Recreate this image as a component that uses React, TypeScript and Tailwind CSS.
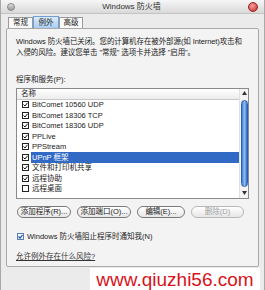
import React from "react";

const ROWS = [
  { label: "BitComet 10560 UDP", checked: true },
  { label: "BitComet 18306 TCP", checked: true },
  { label: "BitComet 18306 UDP", checked: true },
  { label: "PPLive", checked: true },
  { label: "PPStream", checked: true },
  { label: "UPnP 框架", checked: true, selected: true },
  { label: "文件和打印机共享", checked: true },
  { label: "远程协助", checked: true },
  { label: "远程桌面", checked: false },
];

const FONT = { fontFamily: '"Liberation Sans", "Noto Sans CJK SC", sans-serif' };

function Box({ checked }: { checked: boolean }) {
  return (
    <span className="w-[7px] h-[7px] border border-[#222] bg-white flex items-center justify-center shrink-0">
      {checked && (
        <svg width="5" height="5" viewBox="0 0 5 5">
          <path d="M0.5 2.5 L2 4 L4.5 0.8" stroke="#111" strokeWidth="1" fill="none" />
        </svg>
      )}
    </span>
  );
}

function Btn({ children, disabled }: { children: React.ReactNode; disabled?: boolean }) {
  return (
    <div
      className={
        "h-[12px] rounded-full border flex items-center justify-center text-[7.5px] leading-none bg-gradient-to-b from-white to-[#e6e6e6] " +
        (disabled ? "border-[#b8b8b8] text-[#a0a0a0]" : "border-[#7a7a7a] text-[#222]")
      }
    >
      {children}
    </div>
  );
}

export default function App() {
  return (
    <div className="relative w-[265px] h-[290px] bg-[#ebebeb] overflow-hidden border-x border-[#a8a8a8] text-[#222]" style={FONT}>
      {/* title bar */}
      <div className="h-[14px] flex items-center justify-between px-[6px] bg-gradient-to-b from-[#f6f6f6] to-[#d9d9d9] border-b border-[#c4c4c4]">
        <span className="w-[8px] h-[8px] rounded-full bg-gradient-to-b from-[#e0e0e0] to-[#9a9a9a] border border-[#888]" />
        <span className="text-[8px] leading-none text-[#333]">Windows 防火墙</span>
        <span className="w-[10px] h-[10px] rounded-full bg-[radial-gradient(circle_at_40%_35%,#f5a0a0,#c42828)] border border-[#9c2020]" />
      </div>

      {/* tabs */}
      <div className="flex pl-[7px] pt-[3px] h-[14px] items-end">
        <div className="h-[11px] w-[25px] border border-b-0 border-[#9a9a9a] bg-[#fafafa] text-[7.5px] leading-none flex items-center justify-center">常规</div>
        <div className="h-[12px] w-[26px] border border-b-0 border-[#6f9fd4] bg-gradient-to-b from-[#d9eafb] to-[#a9cdf2] text-[7.5px] leading-none flex items-center justify-center">例外</div>
        <div className="h-[11px] w-[24px] border border-b-0 border-[#9a9a9a] bg-[#fafafa] text-[7.5px] leading-none flex items-center justify-center">高级</div>
      </div>

      {/* panel */}
      <div className="mx-[5px] h-[239px] border border-[#a9a9a9] rounded-[2px] bg-[#f3f3f3] px-[9px] pt-[7px] flex flex-col">
        <p className="text-[7.5px] leading-[11px] tracking-[-0.1px]">
          Windows 防火墙已关闭。您的计算机存在被外部源(如 Internet)攻击和
          <br />
          入侵的风险。建议您单击 "常规" 选项卡并选择 "启用"。
        </p>

        <div className="mt-[18px] text-[7.5px] leading-none">程序和服务(P):</div>

        {/* list */}
        <div className="mt-[4px] h-[111px] border border-[#8a8a8a] bg-white flex">
          <div className="flex-1 flex flex-col">
            <div className="h-[11px] border-b border-[#c8c8c8] bg-gradient-to-b from-white to-[#ececec] text-[7.5px] leading-none flex items-center pl-[4px]">名称</div>
            {ROWS.map(r => (
              <div key={r.label} className="h-[10.5px] flex items-center pl-[5px]">
                <Box checked={r.checked} />
                <span
                  className={
                    "ml-[2px] h-full flex-1 flex items-center text-[7.5px] leading-none pl-[1px] " +
                    (r.selected ? "bg-[#316ac5] text-white" : "")
                  }
                >
                  {r.label}
                </span>
              </div>
            ))}
          </div>
          {/* scrollbar */}
          <div className="w-[9px] border-l border-[#e0e0e0] bg-[#f4f4f4] flex flex-col items-center">
            <div className="h-[9px] w-full flex items-center justify-center">
              <svg width="5" height="4" viewBox="0 0 5 4"><path d="M0 4 L2.5 0 L5 4 Z" fill="#333" /></svg>
            </div>
            <div className="flex-1 w-[7px] my-[2px] rounded-full bg-gradient-to-r from-[#3f7fd8] via-[#8fbaf0] to-[#2f6cc8] border border-[#2a5fb0]" />
            <div className="h-[9px] w-full flex items-center justify-center">
              <svg width="5" height="4" viewBox="0 0 5 4"><path d="M0 0 L2.5 4 L5 0 Z" fill="#333" /></svg>
            </div>
          </div>
        </div>

        {/* buttons */}
        <div className="mt-[7px] grid grid-cols-[54px_54px_48px_53px] gap-x-[6px] px-[1px]">
          <Btn>添加程序(R)...</Btn>
          <Btn>添加端口(O)...</Btn>
          <Btn>编辑(E)...</Btn>
          <Btn disabled>删除(D)</Btn>
        </div>

        <div className="mt-[15px] flex items-center gap-[3px] pl-[1px]">
          <span className="w-[7px] h-[7px] border border-[#5a7fb0] bg-gradient-to-b from-white to-[#dde8f5] flex items-center justify-center">
            <svg width="5" height="5" viewBox="0 0 5 5">
              <path d="M0.5 2.5 L2 4 L4.5 0.8" stroke="#2456a8" strokeWidth="1.2" fill="none" />
            </svg>
          </span>
          <span className="text-[7.5px] leading-none">Windows 防火墙阻止程序时通知我(N)</span>
        </div>

        <div className="mt-[13px] text-[7.5px] leading-none underline text-[#333]">允许例外存在什么风险?</div>
      </div>

      {/* watermark */}
      <div className="absolute left-[89px] top-[268px] w-[170px] h-[22px] bg-white flex items-center justify-center">
        <span className="text-[19px] leading-none text-[#d8131b]" style={{ fontFamily: '"Liberation Sans", sans-serif' }}>
          www.qiuzhi56.com
        </span>
      </div>
    </div>
  );
}
